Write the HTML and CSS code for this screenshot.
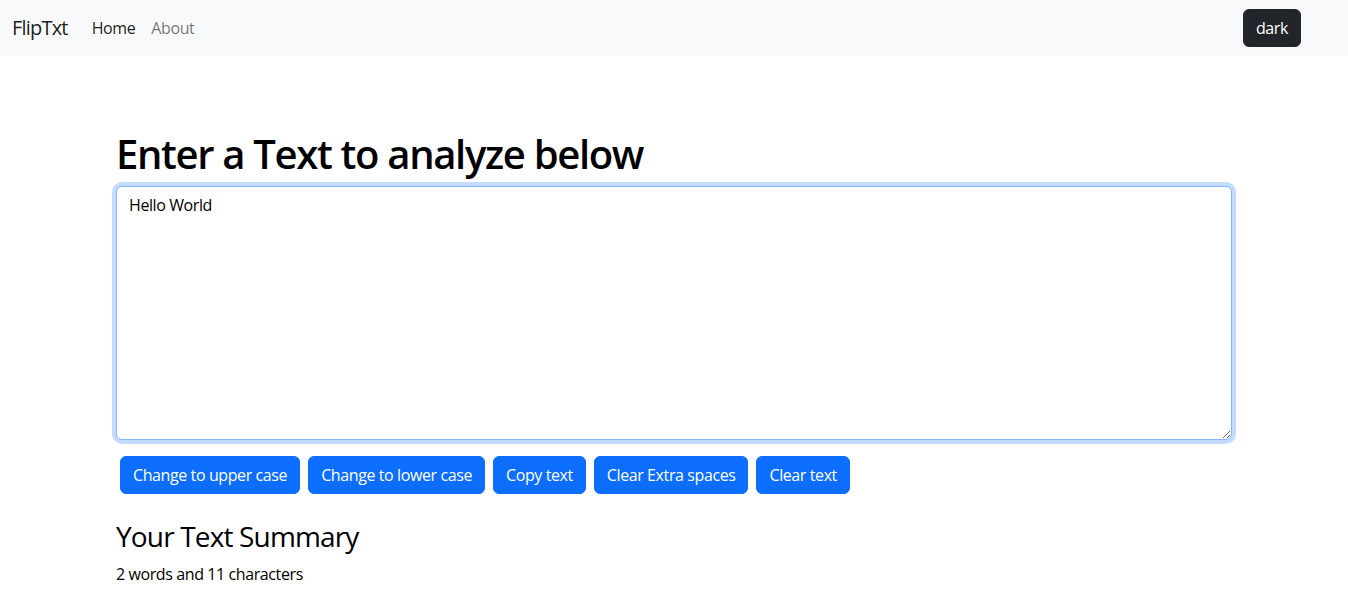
FILE: index.html
```html
<!DOCTYPE html>
<html lang="en">
<head>
<meta charset="utf-8">
<title>FlipTxt</title>
<link rel="stylesheet" href="styles.css">
</head>
<body>
<nav class="navbar">
  <div class="nav-inner">
    <a class="brand" href="#">FlipTxt</a>
    <ul class="nav-links">
      <li><a class="nav-link active" href="#">Home</a></li>
      <li><a class="nav-link" href="#">About</a></li>
    </ul>
    <button class="btn-dark">dark</button>
  </div>
</nav>
<main class="container">
  <div class="analyzer">
    <h1 class="title">Enter a Text to analyze below</h1>
    <textarea class="text-box" rows="10">Hello World</textarea>
    <div class="actions">
      <button class="btn-primary">Change to upper case</button>
      <button class="btn-primary">Change to lower case</button>
      <button class="btn-primary">Copy text</button>
      <button class="btn-primary">Clear Extra spaces</button>
      <button class="btn-primary">Clear text</button>
    </div>
  </div>
  <section class="summary">
    <h2 class="summary-title">Your Text Summary</h2>
    <p class="summary-text">2 words and 11 characters</p>
  </section>
</main>
</body>
</html>
```
FILE: styles.css
```css
* { box-sizing: border-box; }
html, body { margin: 0; padding: 0; }
body {
  font-family: "Open Sans", "Noto Sans", sans-serif;
  font-size: 16px;
  line-height: 1.5;
  letter-spacing: -0.025em;
  color: #000;
  background: #fff;
}
.navbar {
  background: #f8f9fa;
  padding: 8px 0;
}
.nav-inner {
  display: flex;
  align-items: center;
  padding: 0 12px;
}
.brand {
  font-size: 20px;
  line-height: 30px;
  padding: 5px 0;
  margin-right: 16px;
  letter-spacing: -0.04em;
  color: rgba(0,0,0,.9);
  text-decoration: none;
}
.nav-links {
  display: flex;
  list-style: none;
  margin: 0;
  padding: 0;
  flex: 1;
}
.nav-link {
  display: block;
  padding: 8px 8px;
  color: rgba(0,0,0,.55);
  text-decoration: none;
}
.nav-link.active { color: rgba(0,0,0,.9); }
.btn-dark {
  font: inherit;
  letter-spacing: inherit;
  color: #fff;
  background: #212529;
  border: 1px solid #212529;
  border-radius: 6px;
  padding: 6px 12px;
  margin-right: 35px;
}
.container {
  max-width: 1140px;
  margin: 0 auto;
  padding: 0 12px;
}
.analyzer { margin-top: 74px; }
.title {
  font-size: 40px;
  font-weight: 600;
  line-height: 1.2;
  letter-spacing: -0.033em;
  margin: 0 0 8px;
}
.text-box {
  display: block;
  width: 100%;
  font: inherit;
  letter-spacing: inherit;
  color: #000;
  padding: 6px 12px;
  border: 1px solid #86b7fe;
  border-radius: 6px;
  box-shadow: 0 0 0 4px rgba(13,110,253,.25);
  outline: none;
  resize: vertical;
  margin-bottom: 16px;
}
.actions { display: flex; flex-wrap: wrap; }
.btn-primary {
  font: inherit;
  letter-spacing: inherit;
  color: #fff;
  background: #0d6efd;
  border: 1px solid #0d6efd;
  border-radius: 6px;
  padding: 6px 12px;
  margin: 0 4px;
}
.summary { margin-top: 26px; }
.summary-title {
  font-size: 28px;
  font-weight: 500;
  line-height: 1.2;
  letter-spacing: -0.03em;
  margin: 0 0 8px;
}
.summary-text { margin: 0 0 16px; }
```
